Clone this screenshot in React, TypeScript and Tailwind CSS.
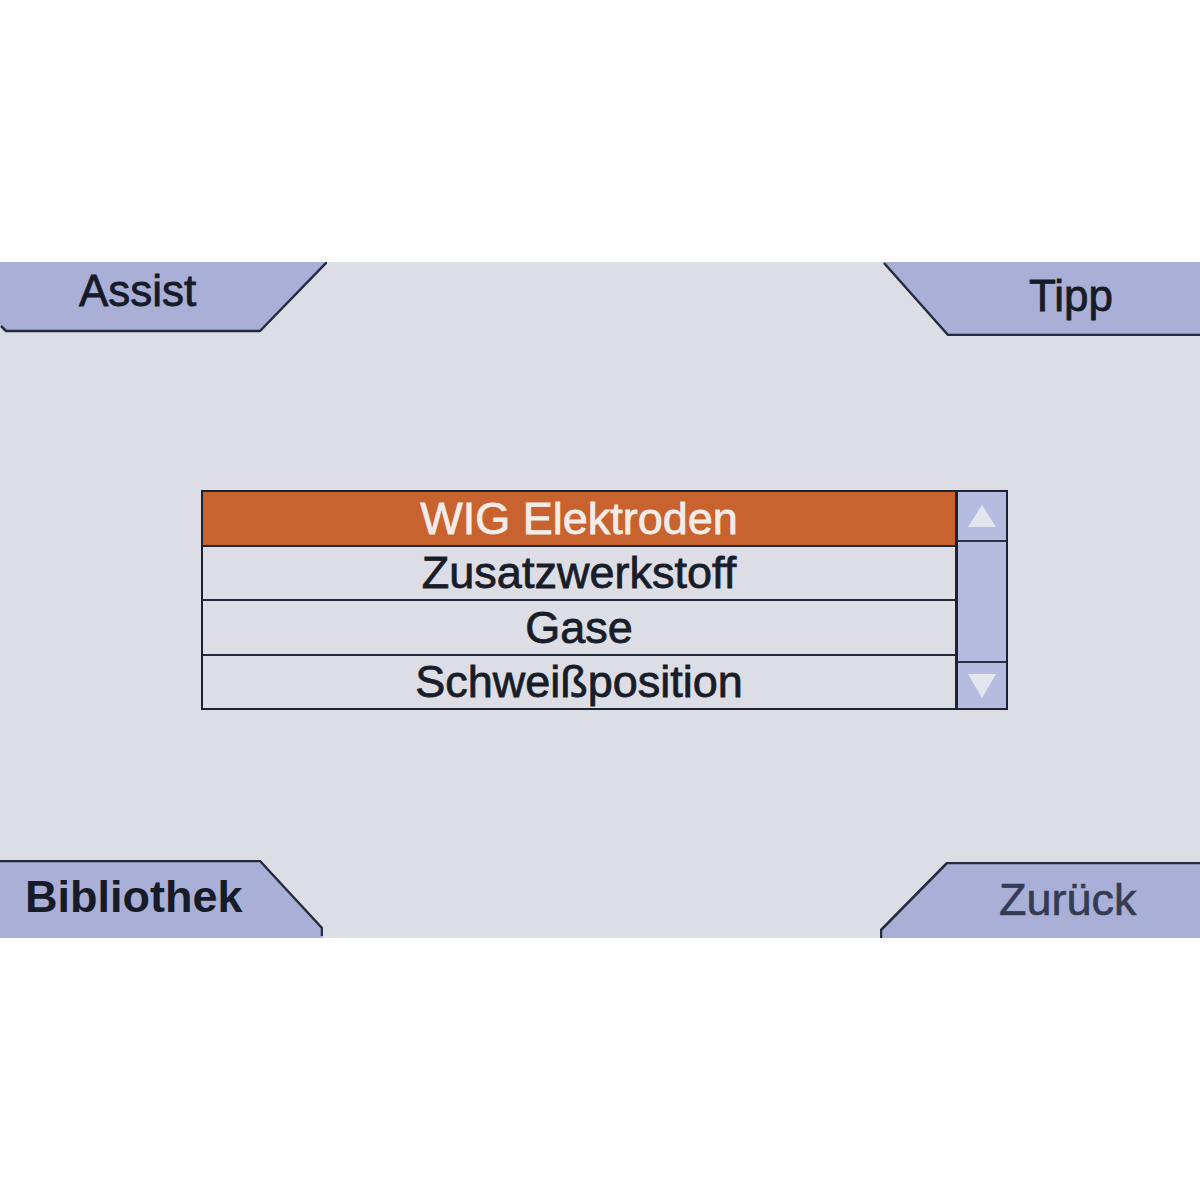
const font = { fontFamily: '"Liberation Sans", Arial, sans-serif' };

const items = ["WIG Elektroden", "Zusatzwerkstoff", "Gase", "Schweißposition"];

type TabProps = {
  label: string;
  w: number;
  h: number;
  fill: string; // polygon for the fill
  line: string; // polyline for the dark edge
  className: string;
  textClass: string;
};

function Tab({ label, w, h, fill, line, className, textClass }: TabProps) {
  return (
    <div className={`relative shrink-0 ${className}`}>
      <svg
        className="absolute inset-0"
        width={w}
        height={h}
        viewBox={`0 0 ${w} ${h}`}
      >
        <polygon points={fill} fill="#a9afd7" />
        <polyline
          points={line}
          fill="none"
          stroke="#262b40"
          strokeWidth="2.5"
          strokeLinejoin="round"
        />
      </svg>
      <span className={`relative block leading-none ${textClass}`}>{label}</span>
    </div>
  );
}

function ScrollBar() {
  return (
    <div className="w-[51px] flex flex-col bg-[#b6bce0] border-l-[3px] border-[#1b2436]">
      <div className="h-[50px] flex items-center justify-center border-b-2 border-[#2a3144]">
        <svg width="30" height="24" viewBox="0 0 30 24">
          <polygon points="15,1 29,23 1,23" fill="#e3e5ef" />
        </svg>
      </div>
      <div className="flex-1" />
      <div className="h-[47px] flex items-center justify-center border-t-2 border-[#2a3144]">
        <svg width="30" height="26" viewBox="0 0 30 26">
          <polygon points="1,1 29,1 15,25" fill="#e3e5ef" />
        </svg>
      </div>
    </div>
  );
}

export default function App() {
  return (
    <div className="w-[1200px] h-[1200px] bg-white pt-[262px]" style={font}>
      <div className="h-[676px] bg-[#dddee5] flex flex-col">
        <div className="flex justify-between items-start">
          <Tab
            label="Assist"
            w={327}
            h={71}
            fill="0,0 327,0 260,69 6,69 0,63"
            line="327,0 260,69 6,69 1,64"
            className="w-[327px] h-[71px]"
            textClass="pl-[79px] pt-[7px] text-[44px] text-[#161b28] [-webkit-text-stroke:0.8px_#161b28]"
          />
          <Tab
            label="Tipp"
            w={317}
            h={74}
            fill="0,0 317,0 317,73 65,73"
            line="1,1 65,73 317,73"
            className="w-[317px] h-[74px]"
            textClass="pl-[146px] pt-[12px] text-[44px] text-[#161b28] [-webkit-text-stroke:0.8px_#161b28]"
          />
        </div>

        <div className="mt-[154px] pl-[201px]">
          <div className="w-[807px] h-[220px] flex border-2 border-[#1c2230] bg-[#dddee5]">
            <div className="flex-1 flex flex-col">
              {items.map((t, i) => (
                <div
                  key={t}
                  className={`flex-1 flex items-center justify-center text-[45px] leading-none ${
                    i === 0
                      ? "bg-[#c8632f] text-[#f3ece8] [-webkit-text-stroke:0.8px_#f3ece8]"
                      : "text-[#181d29] [-webkit-text-stroke:0.8px_#181d29]"
                  } ${i < items.length - 1 ? "border-b-2 border-[#222938]" : ""}`}
                >
                  {t}
                </div>
              ))}
            </div>
            <ScrollBar />
          </div>
        </div>

        <div className="flex-1" />

        <div className="flex justify-between items-end">
          <Tab
            label="Bibliothek"
            w={323}
            h={78}
            fill="0,0 260,0 323,68 323,78 0,78"
            line="0,1 260,1 322,68 322,76"
            className="w-[323px] h-[78px]"
            textClass="pl-[25px] pt-[14px] text-[45px] font-bold text-[#161b28]"
          />
          <Tab
            label="Zurück"
            w={320}
            h={76}
            fill="67,0 320,0 320,76 0,76 0,68"
            line="320,1 67,1 1,68 1,76"
            className="w-[320px] h-[76px]"
            textClass="pl-[119px] pt-[15px] text-[45px] text-[#353b52] [-webkit-text-stroke:0.6px_#353b52]"
          />
        </div>
      </div>
    </div>
  );
}
